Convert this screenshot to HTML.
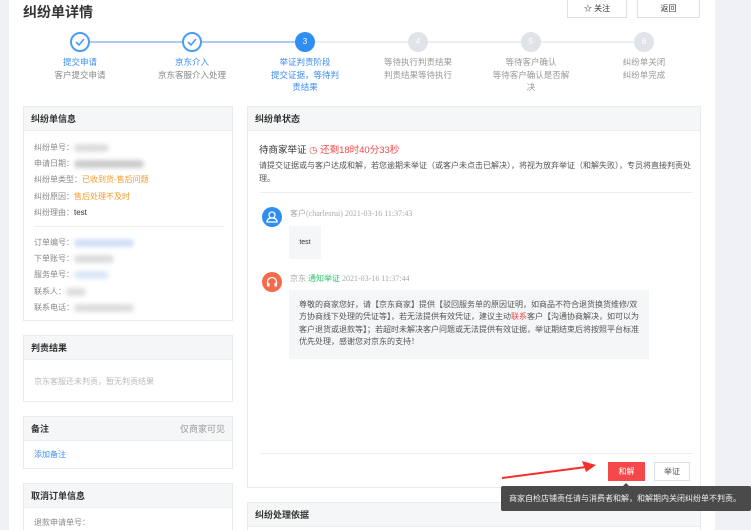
<!DOCTYPE html>
<html style="overflow:hidden;width:751px;height:530px"><head><meta charset="utf-8"><style>
*{margin:0;padding:0;box-sizing:border-box}
body{width:751px;height:530px;overflow:hidden;background:#fff;font-family:"Liberation Sans","Noto Sans CJK SC",sans-serif;font-size:8px;color:#333;position:relative}
.a{position:absolute}
.card{position:absolute;border:1px solid #e8eaee;background:#fff;overflow:hidden}
.hd{background:#f5f6f8;height:24px;line-height:24px;padding-left:7px;font-size:9px;font-weight:bold;color:#333;border-bottom:1px solid #eceef1}
.gray{color:#888}
.circ{position:absolute;width:20px;height:20px;border-radius:50%;text-align:center;line-height:20px;font-size:8px;color:#fff}
.done{border:2px solid #4a9cf5;background:#fff}
.cur{background:#2f8df3}
.todo{background:#e0e3e8}
.lab{position:absolute;width:110px;text-align:center;font-size:8.5px;line-height:12.5px}
.blur{display:inline-block;height:8px;border-radius:4px;vertical-align:middle;filter:blur(2px)}
</style></head><body>
<div class="a" style="left:0;top:0;width:9px;height:530px;background:#eef0f4"></div>
<div class="a" style="left:715px;top:0;width:36px;height:530px;background:#eef0f4"></div>
<div class="a" style="left:23px;top:2px;font-size:14px;font-weight:bold;color:#333">纠纷单详情</div>
<div class="a" style="left:567px;top:-1px;width:60px;height:19px;border:1px solid #dcdfe4;text-align:center;line-height:17px;font-size:8px;background:#fff">☆ 关注</div>
<div class="a" style="left:637px;top:-1px;width:63px;height:19px;border:1px solid #dcdfe4;text-align:center;line-height:17px;font-size:8px;background:#fff">返回</div>
<div class="a" style="left:80px;top:41px;width:225px;height:2px;background:#a9cdf8"></div>
<div class="a" style="left:305px;top:41px;width:340px;height:2px;background:#eceef1"></div>
<div class="circ done" style="left:70px;top:32px"><svg width="16" height="16" viewBox="0 0 16 16"><path d="M4 8l3 3 5-6" stroke="#4a9cf5" stroke-width="1.6" fill="none"/></svg></div>
<div class="circ done" style="left:182px;top:32px"><svg width="16" height="16" viewBox="0 0 16 16"><path d="M4 8l3 3 5-6" stroke="#4a9cf5" stroke-width="1.6" fill="none"/></svg></div>
<div class="circ cur" style="left:295px;top:32px">3</div>
<div class="circ todo" style="left:408px;top:32px">4</div>
<div class="circ todo" style="left:521px;top:32px">5</div>
<div class="circ todo" style="left:634px;top:32px">6</div>
<div class="lab" style="left:25px;top:56px"><span style="color:#3d8ef0">提交申请</span><br><span class="gray">客户提交申请</span></div>
<div class="lab" style="left:137px;top:56px"><span style="color:#3d8ef0">京东介入</span><br><span class="gray">京东客服介入处理</span></div>
<div class="lab" style="left:268px;top:56px;width:74px;color:#3d8ef0">举证判责阶段<br>提交证据，等待判责结果</div>
<div class="lab" style="left:363px;top:56px;color:#999">等待执行判责结果<br>判责结果等待执行</div>
<div class="lab" style="left:491px;top:56px;width:80px;color:#999">等待客户确认<br>等待客户确认是否解决</div>
<div class="lab" style="left:589px;top:56px;color:#999">纠纷单关闭<br>纠纷单完成</div>
<div class="card" style="left:23px;top:106px;width:210px;height:215px"><div class="hd">纠纷单信息</div>
<div class="a gray" style="left:10px;top:33px;line-height:16.2px">纠纷单号：<span class="blur" style="width:35px;background:#ddd"></span><br>申请日期：<span class="blur" style="width:70px;background:#ccc"></span><br>纠纷单类型：<span style="color:#f39a2b">已收到货-售后问题</span><br>纠纷原因：<span style="color:#f39a2b">售后处理不及时</span><br>纠纷理由：<span style="color:#333">test</span></div>
<div class="a" style="left:10px;top:119px;width:190px;height:1px;background:#eceef1"></div>
<div class="a gray" style="left:10px;top:128px;line-height:16.2px">订单编号：<span class="blur" style="width:60px;background:#cfe0f8"></span><br>下单账号：<span class="blur" style="width:40px;background:#ddd"></span><br>服务单号：<span class="blur" style="width:35px;background:#dbe7f8"></span><br>联系人：<span class="blur" style="width:20px;background:#ddd"></span><br>联系电话：<span class="blur" style="width:60px;background:#ddd"></span></div>
</div>
<div class="card" style="left:23px;top:335px;width:210px;height:67px"><div class="hd">判责结果</div><div class="a" style="left:10px;top:40px;color:#bbb">京东客服还未判责，暂无判责结果</div></div>
<div class="card" style="left:23px;top:416px;width:210px;height:53px"><div class="hd">备注<span style="float:right;margin-right:7px;font-weight:normal;color:#999">仅商家可见</span></div><div class="a" style="left:10px;top:32px;color:#3d8ef0">添加备注</div></div>
<div class="card" style="left:23px;top:483px;width:210px;height:60px"><div class="hd">取消订单信息</div><div class="a gray" style="left:10px;top:33px">退款申请单号：</div></div>
<div class="card" style="left:247px;top:106px;width:454px;height:382px"><div class="hd">纠纷单状态</div>
<div class="a" style="left:11px;top:35px;font-size:9.5px">待商家举证 <span style="color:#f5484a">◷ 还剩18时40分33秒</span></div>
<div class="a" style="left:11px;top:52px;width:440px;line-height:13px;color:#555">请提交证据或与客户达成和解，若您逾期未举证（或客户未点击已解决），将视为放弃举证（和解失败），专员将直接判责处理。</div>
<div class="a" style="left:12px;top:85px;width:433px;height:1px;background:#eceef1"></div>
<div class="a" style="left:14px;top:100px;width:20px;height:20px;border-radius:50%;background:#2f8df3"><svg width="20" height="20" viewBox="0 0 20 20"><circle cx="10" cy="8" r="3" stroke="#fff" fill="none" stroke-width="1.3"/><path d="M5 15h10c0-3-2-4-5-4s-5 1-5 4z" stroke="#fff" fill="none" stroke-width="1.3"/></svg></div>
<div class="a" style="left:42px;top:101px;color:#aaa;font-family:'Liberation Serif','Noto Sans CJK SC',serif">客户(charlesrui) 2021-03-16 11:37:43</div>
<div class="a" style="left:41px;top:119px;width:32px;height:33px;background:#f5f6f8;text-align:center;line-height:33px;font-size:7px">test</div>
<div class="a" style="left:14px;top:165px;width:20px;height:20px;border-radius:50%;background:#f56a4a"><svg width="20" height="20" viewBox="0 0 20 20"><path d="M5.5 12v-2a4.5 4.5 0 0 1 9 0v2" stroke="#fff" fill="none" stroke-width="1.3"/><rect x="5" y="11" width="2.5" height="3.5" fill="#fff"/><rect x="12.5" y="11" width="2.5" height="3.5" fill="#fff"/></svg></div>
<div class="a" style="left:42px;top:166px;color:#aaa;font-family:'Liberation Serif','Noto Sans CJK SC',serif">京东 <span style="color:#2bc36b;font-family:'Liberation Sans','Noto Sans CJK SC',sans-serif">通知举证</span> 2021-03-16 11:37:44</div>
<div class="a" style="left:41px;top:183px;width:360px;height:69px;background:#f5f6f8;padding:9px 10px;line-height:12.3px;color:#555">尊敬的商家您好，请【京东商家】提供【驳回服务单的原因证明，如商品不符合退货换货维修/双方协商线下处理的凭证等】，若无法提供有效凭证，建议主动<span style="color:#f5484a">联系</span>客户【沟通协商解决，如可以为客户退货或退款等】；若超时未解决客户问题或无法提供有效证据，举证期结束后将按照平台标准优先处理，感谢您对京东的支持！</div>
<div class="a" style="left:12px;top:346px;width:433px;height:1px;background:#eceef1"></div>
<div class="a" style="left:360px;top:355px;width:37px;height:19px;background:#f5484a;color:#fff;text-align:center;line-height:19px">和解</div>
<div class="a" style="left:406px;top:355px;width:36px;height:19px;border:1px solid #dcdfe4;text-align:center;line-height:17px;color:#555">举证</div>
</div>
<svg class="a" style="left:498px;top:458px" width="100" height="24"><path d="M4 20L88 9" stroke="#f5302a" stroke-width="2"/><path d="M84 3L98 7L88 14z" fill="#f5302a"/></svg>
<div class="card" style="left:247px;top:502px;width:454px;height:28px;border-bottom:0"><div class="hd">纠纷处理依据</div></div>
<div class="a" style="left:622px;top:483px;width:0;height:0;border:4px solid transparent;border-bottom-color:#4a4a4a;border-top:0"></div>
<div class="a" style="left:501px;top:486px;width:250px;height:25px;background:#4a4a4a;color:#eee;line-height:25px;padding-left:8px;font-size:8px;white-space:nowrap;border-radius:2px">商家自检店铺责任请与消费者和解，和解期内关闭纠纷单不判责。</div>
</body></html>
